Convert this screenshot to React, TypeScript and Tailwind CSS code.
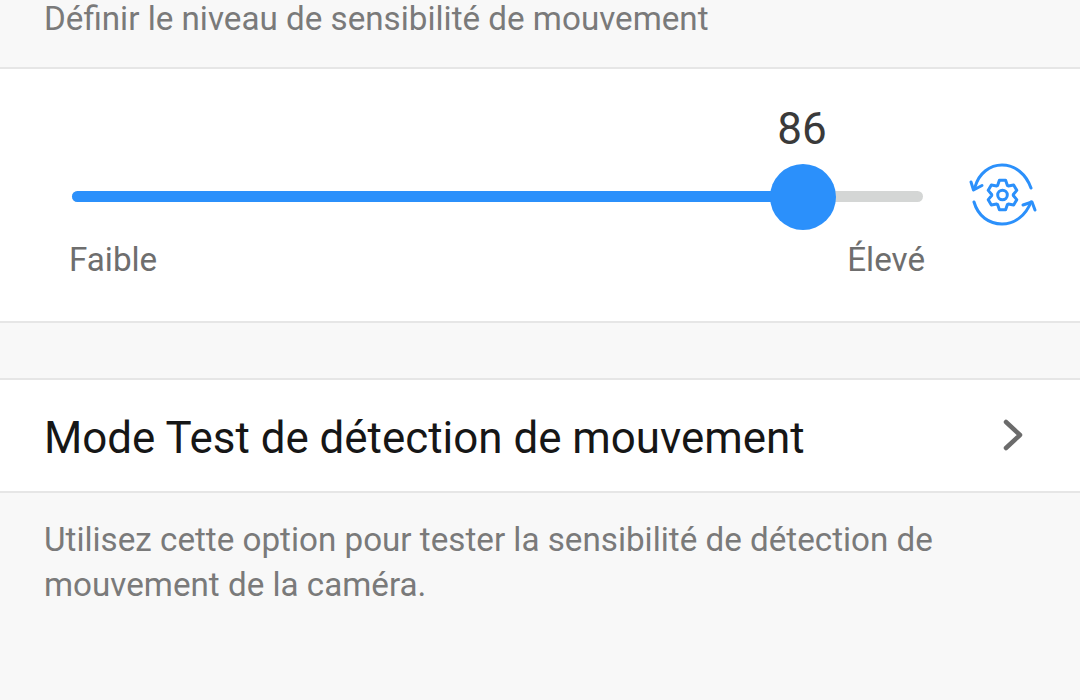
const gearPoints: string[] = [];
for (let i = 0; i < 6; i++) {
  const a = -90 + i * 60;
  for (const [d, r] of [[-27, 10.8], [-12, 15], [12, 15], [27, 10.8]]) {
    const t = ((a + d) * Math.PI) / 180;
    gearPoints.push(`${(36.5 + r * Math.cos(t)).toFixed(2)},${(35 + r * Math.sin(t)).toFixed(2)}`);
  }
}

export default function App() {
  return (
    <div className="h-[700px] w-[1080px] overflow-hidden bg-[#f8f8f8] font-['Roboto',sans-serif]">
      <div className="flex h-[69px] items-end overflow-hidden border-b-2 border-[#e6e6e6] pb-[26px] pl-[44px]">
        <div className="text-[33.2px] leading-[44px] whitespace-nowrap text-[#7a7a7a]">Définir le niveau de sensibilité de mouvement</div>
      </div>
      <div className="flex h-[254px] border-b-2 border-[#e6e6e6] bg-white">
        <div className="ml-[72px] w-[851px] flex flex-col">
          <div className="relative h-[122px]">
            <div className="absolute left-[700px] top-[34px] w-[60px] text-center text-[44px] leading-[52px] text-[#3a3a3a]">86</div>
          </div>
          <div className="relative h-[11px] rounded-full bg-[#d4d6d5]">
            <div className="h-full w-[731px] rounded-l-full bg-[#2b90fb]" />
            <div className="absolute left-[698px] top-[-27px] h-[66px] w-[66px] rounded-full bg-[#2b90fb]" />
          </div>
          <div className="-ml-[3px] -mr-[2px] mt-[36px] flex justify-between text-[33.2px] leading-[44px] text-[#6e6e6e]">
            <span>Faible</span>
            <span>Élevé</span>
          </div>
        </div>
        <div className="ml-[43px] mt-[91px]">
          <svg width="74" height="70" viewBox="0 0 74 70" fill="none" stroke="#2b90fb" strokeWidth="3" strokeLinecap="round" strokeLinejoin="round">
            <path d="M9 27C13 13 24 5 36 5c13 0 24 9 29 23" />
            <path d="M5 22 7.500 30 16 25.500" />
            <path d="M8 42c4 14 15 22 28 22 13 0 24-9 29-22" />
            <path d="M57 45 66 42 69 50" />
            <polygon points={gearPoints.join(" ")} />
            <circle cx="36.500" cy="35" r="4.800" />
          </svg>
        </div>
      </div>
      <div className="mt-[55px] flex h-[115px] items-center justify-between border-y-2 border-[#e6e6e6] bg-white pl-[44px] pr-[56px]">
        <div className="mt-[5px] text-[43.9px] leading-[56px] whitespace-nowrap text-[#161616]">Mode Test de détection de mouvement</div>
        <svg width="22" height="32" viewBox="0 0 22 32" fill="none" stroke="#6b6b6b" strokeWidth="4.500" strokeLinecap="round" strokeLinejoin="round" className="mb-[2px]">
          <path d="M4 3 18 16 4 29" />
        </svg>
      </div>
      <div className="pl-[44px] pt-[24px] text-[33.2px] leading-[45px] text-[#7a7a7a]">
        <div>Utilisez cette option pour tester la sensibilité de détection de</div>
        <div>mouvement de la caméra.</div>
      </div>
    </div>
  );
}
